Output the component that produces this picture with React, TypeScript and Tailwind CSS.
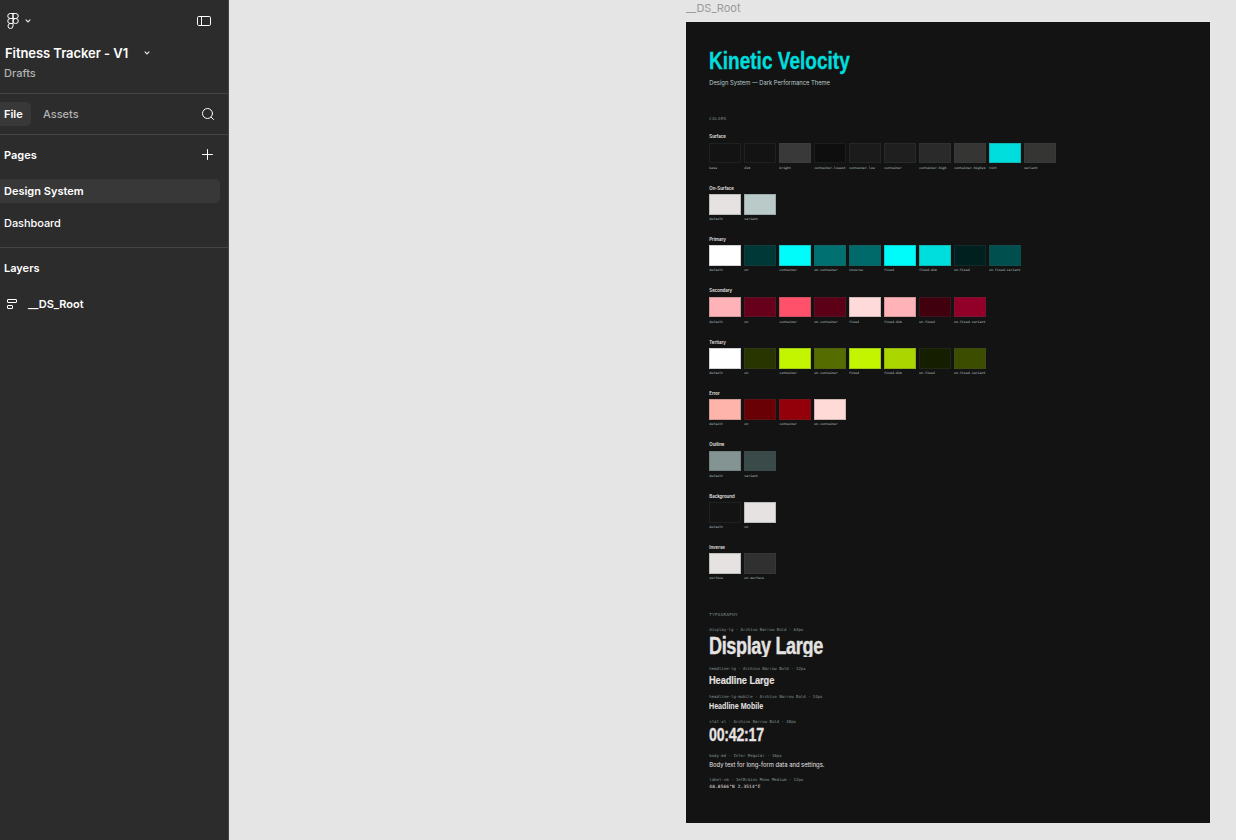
import React from 'react';

type Swatch = [name: string, color: string];

const PALETTE: { title: string; swatches: Swatch[] }[] = [
  {
    title: 'Surface',
    swatches: [
      ['base', '#131313'],
      ['dim', '#131313'],
      ['bright', '#393939'],
      ['container-lowest', '#0e0e0e'],
      ['container-low', '#1c1b1b'],
      ['container', '#201f1f'],
      ['container-high', '#2a2a2a'],
      ['container-highest', '#353534'],
      ['tint', '#00dddd'],
      ['variant', '#353534'],
    ],
  },
  {
    title: 'On-Surface',
    swatches: [
      ['default', '#e5e2e1'],
      ['variant', '#b9cac9'],
    ],
  },
  {
    title: 'Primary',
    swatches: [
      ['default', '#ffffff'],
      ['on', '#003737'],
      ['container', '#00fbfb'],
      ['on-container', '#007070'],
      ['inverse', '#006a6a'],
      ['fixed', '#00fbfb'],
      ['fixed-dim', '#00dddd'],
      ['on-fixed', '#002020'],
      ['on-fixed-variant', '#004f4f'],
    ],
  },
  {
    title: 'Secondary',
    swatches: [
      ['default', '#ffb2b7'],
      ['on', '#67001b'],
      ['container', '#ff516a'],
      ['on-container', '#5b0017'],
      ['fixed', '#ffdadb'],
      ['fixed-dim', '#ffb2b7'],
      ['on-fixed', '#40000d'],
      ['on-fixed-variant', '#92002a'],
    ],
  },
  {
    title: 'Tertiary',
    swatches: [
      ['default', '#ffffff'],
      ['on', '#283500'],
      ['container', '#c3f400'],
      ['on-container', '#556d00'],
      ['fixed', '#c3f400'],
      ['fixed-dim', '#abd600'],
      ['on-fixed', '#161e00'],
      ['on-fixed-variant', '#3c4d00'],
    ],
  },
  {
    title: 'Error',
    swatches: [
      ['default', '#ffb4ab'],
      ['on', '#690005'],
      ['container', '#93000a'],
      ['on-container', '#ffdad6'],
    ],
  },
  {
    title: 'Outline',
    swatches: [
      ['default', '#839493'],
      ['variant', '#3a4a49'],
    ],
  },
  {
    title: 'Background',
    swatches: [
      ['default', '#131313'],
      ['on', '#e5e2e1'],
    ],
  },
  {
    title: 'Inverse',
    swatches: [
      ['surface', '#e5e2e1'],
      ['on-surface', '#313030'],
    ],
  },
];

const NARROW = "font-['Liberation_Sans',sans-serif] font-bold origin-left";
const MONO = "font-['DejaVu_Sans_Mono',monospace]";

const TYPE_STYLES = [
  {
    spec: 'display-lg · Archivo Narrow Bold · 64px',
    sample: 'Display Large',
    row: 'h-[39px]',
    text: `${NARROW} h-[23.5px] leading-[25px] text-[23.3px] tracking-[-0.47px] scale-x-[.776] overflow-hidden [-webkit-text-stroke:0.35px]`,
  },
  {
    spec: 'headline-lg · Archivo Narrow Bold · 32px',
    sample: 'Headline Large',
    row: 'h-[28.5px]',
    text: `${NARROW} h-[14px] leading-[13px] text-[11.65px] tracking-[-0.1px] scale-x-[.795] [-webkit-text-stroke:0.15px]`,
  },
  {
    spec: 'headline-lg-mobile · Archivo Narrow Bold · 24px',
    sample: 'Headline Mobile',
    row: 'h-[25px]',
    text: `${NARROW} h-[11px] leading-[10px] text-[8.74px] scale-x-[.815]`,
  },
  {
    spec: 'stat-xl · Archivo Narrow Bold · 48px',
    sample: '00:42:17',
    row: 'h-[33.5px]',
    text: `${NARROW} h-[18px] leading-[18px] text-[17.5px] tracking-[-0.3px] scale-x-[.81] [-webkit-text-stroke:0.3px]`,
  },
  {
    spec: 'body-md · Inter Regular · 16px',
    sample: 'Body text for long-form data and settings.',
    row: 'h-[24px]',
    text: "font-['Inter',sans-serif] h-[9px] leading-[9px] text-[5.84px]",
  },
  {
    spec: 'label-sm · JetBrains Mono Medium · 12px',
    sample: '48.8566°N 2.3514°E',
    row: 'h-[16px]',
    text: `${MONO} h-[6px] leading-[6px] text-[4.37px] tracking-[0.22px]`,
  },
];

const FigmaMark: React.FC = () => (
  <svg width="12" height="16" viewBox="0 0 12 16" fill="none" stroke="#fff">
    <path d="M6 .5H3.25a2.5 2.5 0 0 0 0 5H6zM6 .5h2.75a2.5 2.5 0 0 1 0 5H6zM6 5.5H3.25a2.5 2.5 0 0 0 0 5H6zM6 10.5H3.25A2.5 2.5 0 1 0 6 13z" />
    <rect x="6" y="5.5" width="5.3" height="5" rx="2.5" />
  </svg>
);

const Chevron: React.FC<{ className?: string }> = ({ className }) => (
  <svg className={className} width="6" height="4" viewBox="0 0 6 4" fill="none" stroke="#e6e6e6" strokeLinecap="round">
    <path strokeWidth="1.15" d="M1 .8 3 2.9 5 .8" />
  </svg>
);

const PanelIcon: React.FC = () => (
  <svg width="14" height="10" viewBox="0 0 14 10" fill="none" stroke="#fff">
    <rect x=".5" y=".5" width="13" height="9" rx="1.2" />
    <path d="M4.5.5v9" />
  </svg>
);

const SearchIcon: React.FC = () => (
  <svg width="12" height="12" viewBox="0 0 12 12" fill="none" stroke="#fff" strokeLinecap="round">
    <circle cx="5.5" cy="5.5" r="5" />
    <path d="m9.2 9.2 2.3 2.3" />
  </svg>
);

const PlusIcon: React.FC = () => (
  <svg width="11" height="11" viewBox="0 0 11 11" fill="none" stroke="#fff" strokeLinecap="round">
    <path d="M5.5.5v10M.5 5.5h10" />
  </svg>
);

const AutoLayoutIcon: React.FC = () => (
  <svg width="10" height="10" viewBox="0 0 10 10" fill="none" stroke="#fff">
    <rect x=".5" y=".5" width="9" height="3" rx=".4" />
    <rect x=".5" y="6.5" width="5" height="3" rx=".4" />
  </svg>
);

const Sidebar: React.FC = () => (
  <aside className="flex h-full w-[229px] shrink-0 flex-col border-r border-[#444] bg-[#2c2c2c] text-[11px] font-medium text-white">
    <div className="h-[94px] border-b border-[#444]">
      <div className="flex h-[41px] items-center pr-[17px] pl-[7px]">
        <FigmaMark />
        <Chevron className="mt-px ml-[6px]" />
        <span className="ml-auto">
          <PanelIcon />
        </span>
      </div>
      <div className="flex h-[24px] items-center pl-[5px]">
        <span className="pt-px text-[13px] font-semibold tracking-[-0.06px]">Fitness Tracker - V1</span>
        <Chevron className="ml-[15.5px]" />
      </div>
      <div className="pl-1 leading-4 text-[#b3b3b3]">Drafts</div>
    </div>

    <div className="flex h-[41px] items-center border-b border-[#444] pr-[14px]">
      <div className="flex h-6 w-[31px] items-center rounded-r-[5px] bg-[#383838] pl-1 font-semibold">File</div>
      <div className="ml-3 text-[#b3b3b3]">Assets</div>
      <span className="ml-auto">
        <SearchIcon />
      </span>
    </div>

    <div className="h-[113px] border-b border-[#444]">
      <div className="flex h-[40px] items-center justify-between pr-[15px] pl-1">
        <span className="font-semibold">Pages</span>
        <span className="pb-[2px]">
          <PlusIcon />
        </span>
      </div>
      <div className="mt-1 mr-2 flex h-6 items-center rounded-r-[5px] bg-[#383838] pl-1 font-semibold">
        Design System
      </div>
      <div className="mt-2 flex h-6 items-center pl-1 tracking-[-0.06px]">Dashboard</div>
    </div>

    <div className="flex h-[40px] items-center pl-1 font-semibold">Layers</div>
    <div className="flex h-8 items-center gap-[11px] pl-[7px] font-semibold">
      <AutoLayoutIcon />
      <span>__DS_Root</span>
    </div>
  </aside>
);

const SwatchGroup: React.FC<{ title: string; swatches: Swatch[] }> = ({ title, swatches }) => (
  <div className="h-[51.33px]">
    <div className="h-[9px] pt-[0.6px] text-[4.36px] leading-[6px] font-semibold text-[#e5e2e1]">{title}</div>
    <div className="flex gap-[2.95px]">
      {swatches.map(([name, color]) => (
        <div key={name} className="w-[32.03px] shrink-0 overflow-hidden">
          <div className="h-[20.6px] border border-[#3a4a49]/25" style={{ backgroundColor: color }}></div>
          <div className={`${MONO} mt-[1.5px] h-[6px] overflow-hidden text-[3.28px] leading-[6px] whitespace-nowrap text-[#b9cac9]`}>
            {name}
          </div>
        </div>
      ))}
    </div>
  </div>
);

const DesignSystemFrame: React.FC = () => (
  <div className="h-[801px] w-[524px] bg-[#131313] pt-[25.7px] pl-[23.3px] font-['Inter',sans-serif] whitespace-nowrap">
    <h1 className={`${NARROW} h-[31px] scale-x-[.8] text-[23.8px] leading-[26.5px] text-[#00dddd] [-webkit-text-stroke:0.35px]`}>
      Kinetic Velocity
    </h1>
    <p className="h-[36px] text-[5.8px] leading-[8px] text-[#b9cac9]">Design System — Dark Performance Theme</p>
    <h2 className={`${MONO} h-[19px] text-[4px] leading-[7px] tracking-[0.5px] text-[#839493]`}>COLORS</h2>

    {PALETTE.map((group) => (
      <SwatchGroup key={group.title} {...group} />
    ))}

    <h2 className={`${MONO} mt-[16.8px] h-[14.5px] text-[4px] leading-[6px] tracking-[0.45px] text-[#839493]`}>
      TYPOGRAPHY
    </h2>
    {TYPE_STYLES.map(({ spec, sample, row, text }) => (
      <div key={sample} className={row}>
        <div className={`${MONO} h-[7px] text-[4px] leading-[6px] text-[#839493]`}>{spec}</div>
        <div className={`${text} text-[#e5e2e1]`}>{sample}</div>
      </div>
    ))}
  </div>
);

export default function App() {
  return (
    <div className="flex h-[840px] w-[1236px] overflow-hidden bg-[#e5e5e5] font-['Inter',sans-serif]">
      <Sidebar />
      <main className="flex flex-1 flex-col items-end pr-[26px]">
        <div className="h-[22px] w-[524px] text-[11px] leading-4 text-[#999]">__DS_Root</div>
        <DesignSystemFrame />
      </main>
    </div>
  );
}
